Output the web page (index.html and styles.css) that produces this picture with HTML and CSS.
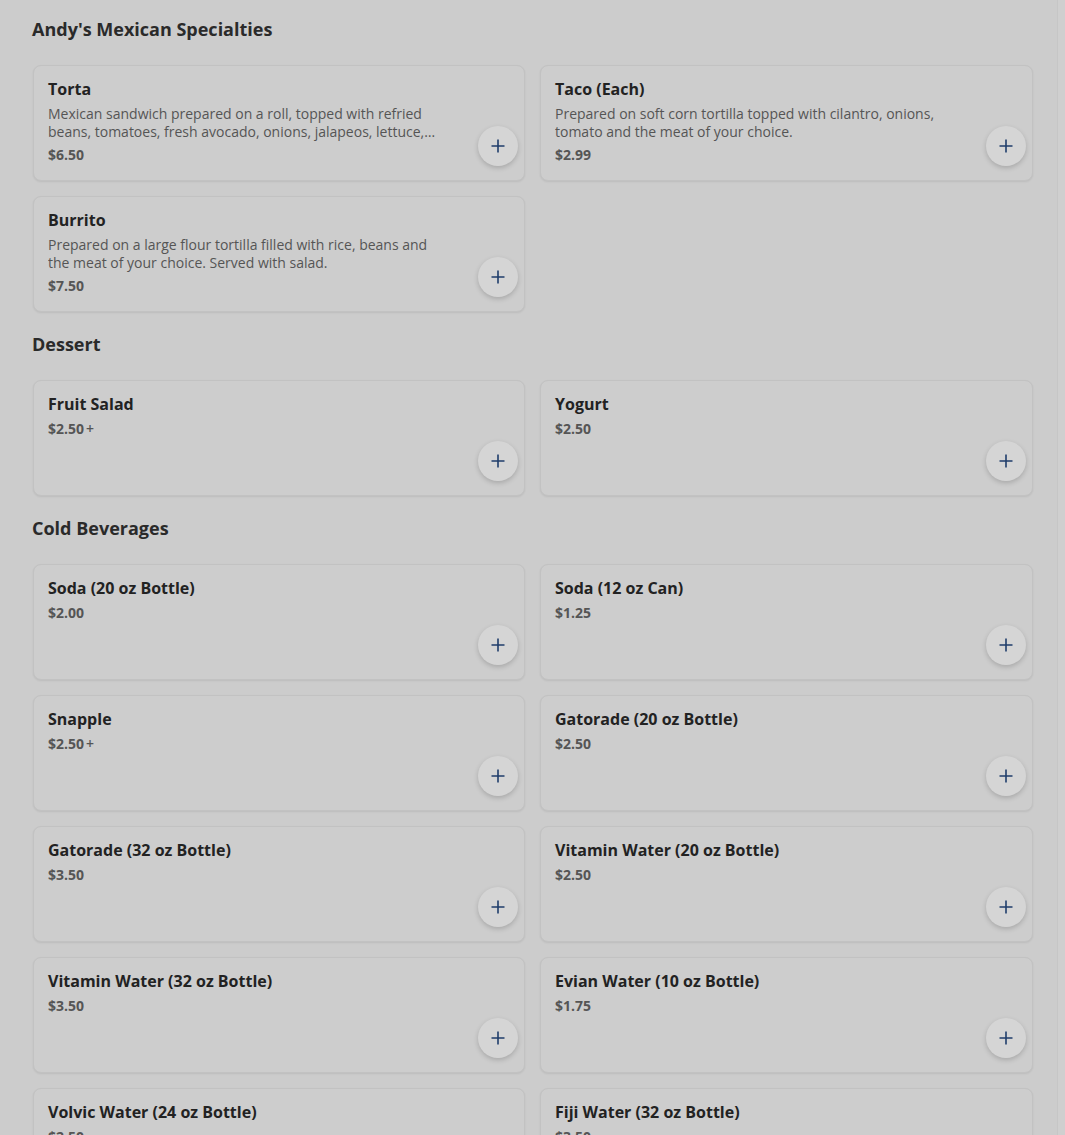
FILE: index.html
```html
<!DOCTYPE html>
<html>
<head>
<meta charset="utf-8">
<link rel="stylesheet" href="styles.css">
</head>
<body>
<div class="page">
  <div class="menu">
    <section class="section">
      <h2 class="section-title">Andy's Mexican Specialties</h2>
      <div class="grid">
        <div class="card">
          <div class="info">
            <div class="name">Torta</div>
            <div class="desc">Mexican sandwich prepared on a roll, topped with refried beans, tomatoes, fresh avocado, onions, jalapeos, lettuce, sour cream and the meat of your choice.</div>
            <div class="price">$6.50</div>
          </div>
          <button class="add"><svg viewBox="0 0 16 16" width="16" height="16"><path d="M8 1.5v13M1.5 8h13" stroke="currentColor" stroke-width="1.6" fill="none"/></svg></button>
        </div>
        <div class="card">
          <div class="info">
            <div class="name">Taco (Each)</div>
            <div class="desc">Prepared on soft corn tortilla topped with cilantro, onions, tomato and the meat of your choice.</div>
            <div class="price">$2.99</div>
          </div>
          <button class="add"><svg viewBox="0 0 16 16" width="16" height="16"><path d="M8 1.5v13M1.5 8h13" stroke="currentColor" stroke-width="1.6" fill="none"/></svg></button>
        </div>
        <div class="card">
          <div class="info">
            <div class="name">Burrito</div>
            <div class="desc">Prepared on a large flour tortilla filled with rice, beans and the meat of your choice. Served with salad.</div>
            <div class="price">$7.50</div>
          </div>
          <button class="add"><svg viewBox="0 0 16 16" width="16" height="16"><path d="M8 1.5v13M1.5 8h13" stroke="currentColor" stroke-width="1.6" fill="none"/></svg></button>
        </div>
      </div>
    </section>

    <section class="section">
      <h2 class="section-title">Dessert</h2>
      <div class="grid">
        <div class="card">
          <div class="info">
            <div class="name">Fruit Salad</div>
            <div class="price">$2.50<span class="more">+</span></div>
          </div>
          <button class="add"><svg viewBox="0 0 16 16" width="16" height="16"><path d="M8 1.5v13M1.5 8h13" stroke="currentColor" stroke-width="1.6" fill="none"/></svg></button>
        </div>
        <div class="card">
          <div class="info">
            <div class="name">Yogurt</div>
            <div class="price">$2.50</div>
          </div>
          <button class="add"><svg viewBox="0 0 16 16" width="16" height="16"><path d="M8 1.5v13M1.5 8h13" stroke="currentColor" stroke-width="1.6" fill="none"/></svg></button>
        </div>
      </div>
    </section>

    <section class="section">
      <h2 class="section-title">Cold Beverages</h2>
      <div class="grid">
        <div class="card">
          <div class="info">
            <div class="name">Soda (20 oz Bottle)</div>
            <div class="price">$2.00</div>
          </div>
          <button class="add"><svg viewBox="0 0 16 16" width="16" height="16"><path d="M8 1.5v13M1.5 8h13" stroke="currentColor" stroke-width="1.6" fill="none"/></svg></button>
        </div>
        <div class="card">
          <div class="info">
            <div class="name">Soda (12 oz Can)</div>
            <div class="price">$1.25</div>
          </div>
          <button class="add"><svg viewBox="0 0 16 16" width="16" height="16"><path d="M8 1.5v13M1.5 8h13" stroke="currentColor" stroke-width="1.6" fill="none"/></svg></button>
        </div>
        <div class="card">
          <div class="info">
            <div class="name">Snapple</div>
            <div class="price">$2.50<span class="more">+</span></div>
          </div>
          <button class="add"><svg viewBox="0 0 16 16" width="16" height="16"><path d="M8 1.5v13M1.5 8h13" stroke="currentColor" stroke-width="1.6" fill="none"/></svg></button>
        </div>
        <div class="card">
          <div class="info">
            <div class="name">Gatorade (20 oz Bottle)</div>
            <div class="price">$2.50</div>
          </div>
          <button class="add"><svg viewBox="0 0 16 16" width="16" height="16"><path d="M8 1.5v13M1.5 8h13" stroke="currentColor" stroke-width="1.6" fill="none"/></svg></button>
        </div>
        <div class="card">
          <div class="info">
            <div class="name">Gatorade (32 oz Bottle)</div>
            <div class="price">$3.50</div>
          </div>
          <button class="add"><svg viewBox="0 0 16 16" width="16" height="16"><path d="M8 1.5v13M1.5 8h13" stroke="currentColor" stroke-width="1.6" fill="none"/></svg></button>
        </div>
        <div class="card">
          <div class="info">
            <div class="name">Vitamin Water (20 oz Bottle)</div>
            <div class="price">$2.50</div>
          </div>
          <button class="add"><svg viewBox="0 0 16 16" width="16" height="16"><path d="M8 1.5v13M1.5 8h13" stroke="currentColor" stroke-width="1.6" fill="none"/></svg></button>
        </div>
        <div class="card">
          <div class="info">
            <div class="name">Vitamin Water (32 oz Bottle)</div>
            <div class="price">$3.50</div>
          </div>
          <button class="add"><svg viewBox="0 0 16 16" width="16" height="16"><path d="M8 1.5v13M1.5 8h13" stroke="currentColor" stroke-width="1.6" fill="none"/></svg></button>
        </div>
        <div class="card">
          <div class="info">
            <div class="name">Evian Water (10 oz Bottle)</div>
            <div class="price">$1.75</div>
          </div>
          <button class="add"><svg viewBox="0 0 16 16" width="16" height="16"><path d="M8 1.5v13M1.5 8h13" stroke="currentColor" stroke-width="1.6" fill="none"/></svg></button>
        </div>
        <div class="card">
          <div class="info">
            <div class="name">Volvic Water (24 oz Bottle)</div>
            <div class="price">$2.50</div>
          </div>
          <button class="add"><svg viewBox="0 0 16 16" width="16" height="16"><path d="M8 1.5v13M1.5 8h13" stroke="currentColor" stroke-width="1.6" fill="none"/></svg></button>
        </div>
        <div class="card">
          <div class="info">
            <div class="name">Fiji Water (32 oz Bottle)</div>
            <div class="price">$3.50</div>
          </div>
          <button class="add"><svg viewBox="0 0 16 16" width="16" height="16"><path d="M8 1.5v13M1.5 8h13" stroke="currentColor" stroke-width="1.6" fill="none"/></svg></button>
        </div>
      </div>
    </section>
  </div>
  <div class="scrollbar"></div>
</div>
</body>
</html>
```

FILE: styles.css
```css
* { box-sizing: border-box; }
html, body {
  margin: 0;
  padding: 0;
  height: 1135px;
  overflow: hidden;
  background: #cccccc;
  font-family: "Open Sans", "Noto Sans", sans-serif;
}
.page {
  display: flex;
  height: 100%;
}
.menu {
  flex: 1;
  padding: 15px 24px 0 32px;
}
.scrollbar {
  width: 8px;
  background: #cfcfcf;
  border-left: 1px solid #c6c6c6;
}
.section {
  margin-bottom: 18px;
}
.section-title {
  margin: 0 0 22px 0;
  font-size: 18px;
  line-height: 28px;
  font-weight: 700;
  color: #2a2a2a;
}
.grid {
  display: grid;
  grid-template-columns: 492px 493px;
  column-gap: 15px;
  row-gap: 15px;
  padding-left: 1px;
}
.card {
  display: flex;
  height: 116px;
  padding: 12px 6px 14px 14px;
  border: 1px solid #c2c2c2;
  border-radius: 8px;
  background: #cdcdcd;
  box-shadow: 0 1px 2px rgba(0,0,0,0.08);
}
.info {
  flex: 1;
  display: flex;
  flex-direction: column;
  gap: 5px;
}
.name {
  font-size: 16px;
  line-height: 22px;
  font-weight: 700;
  color: #222222;
}
.desc {
  width: 396px;
  font-size: 14px;
  line-height: 18px;
  color: #555555;
  display: -webkit-box;
  -webkit-line-clamp: 2;
  -webkit-box-orient: vertical;
  overflow: hidden;
}
.price {
  font-size: 14px;
  line-height: 18px;
  font-weight: 700;
  color: #555555;
}
.more {
  margin-left: 2px;
  font-weight: 600;
}
.add {
  align-self: flex-end;
  width: 40px;
  height: 40px;
  padding: 0;
  border: none;
  border-radius: 50%;
  background: #d5d5d5;
  color: #1f3d6b;
  box-shadow: 0 2px 5px rgba(0,0,0,0.18);
  display: flex;
  align-items: center;
  justify-content: center;
  flex-shrink: 0;
}
.add svg { display: block; }
```
